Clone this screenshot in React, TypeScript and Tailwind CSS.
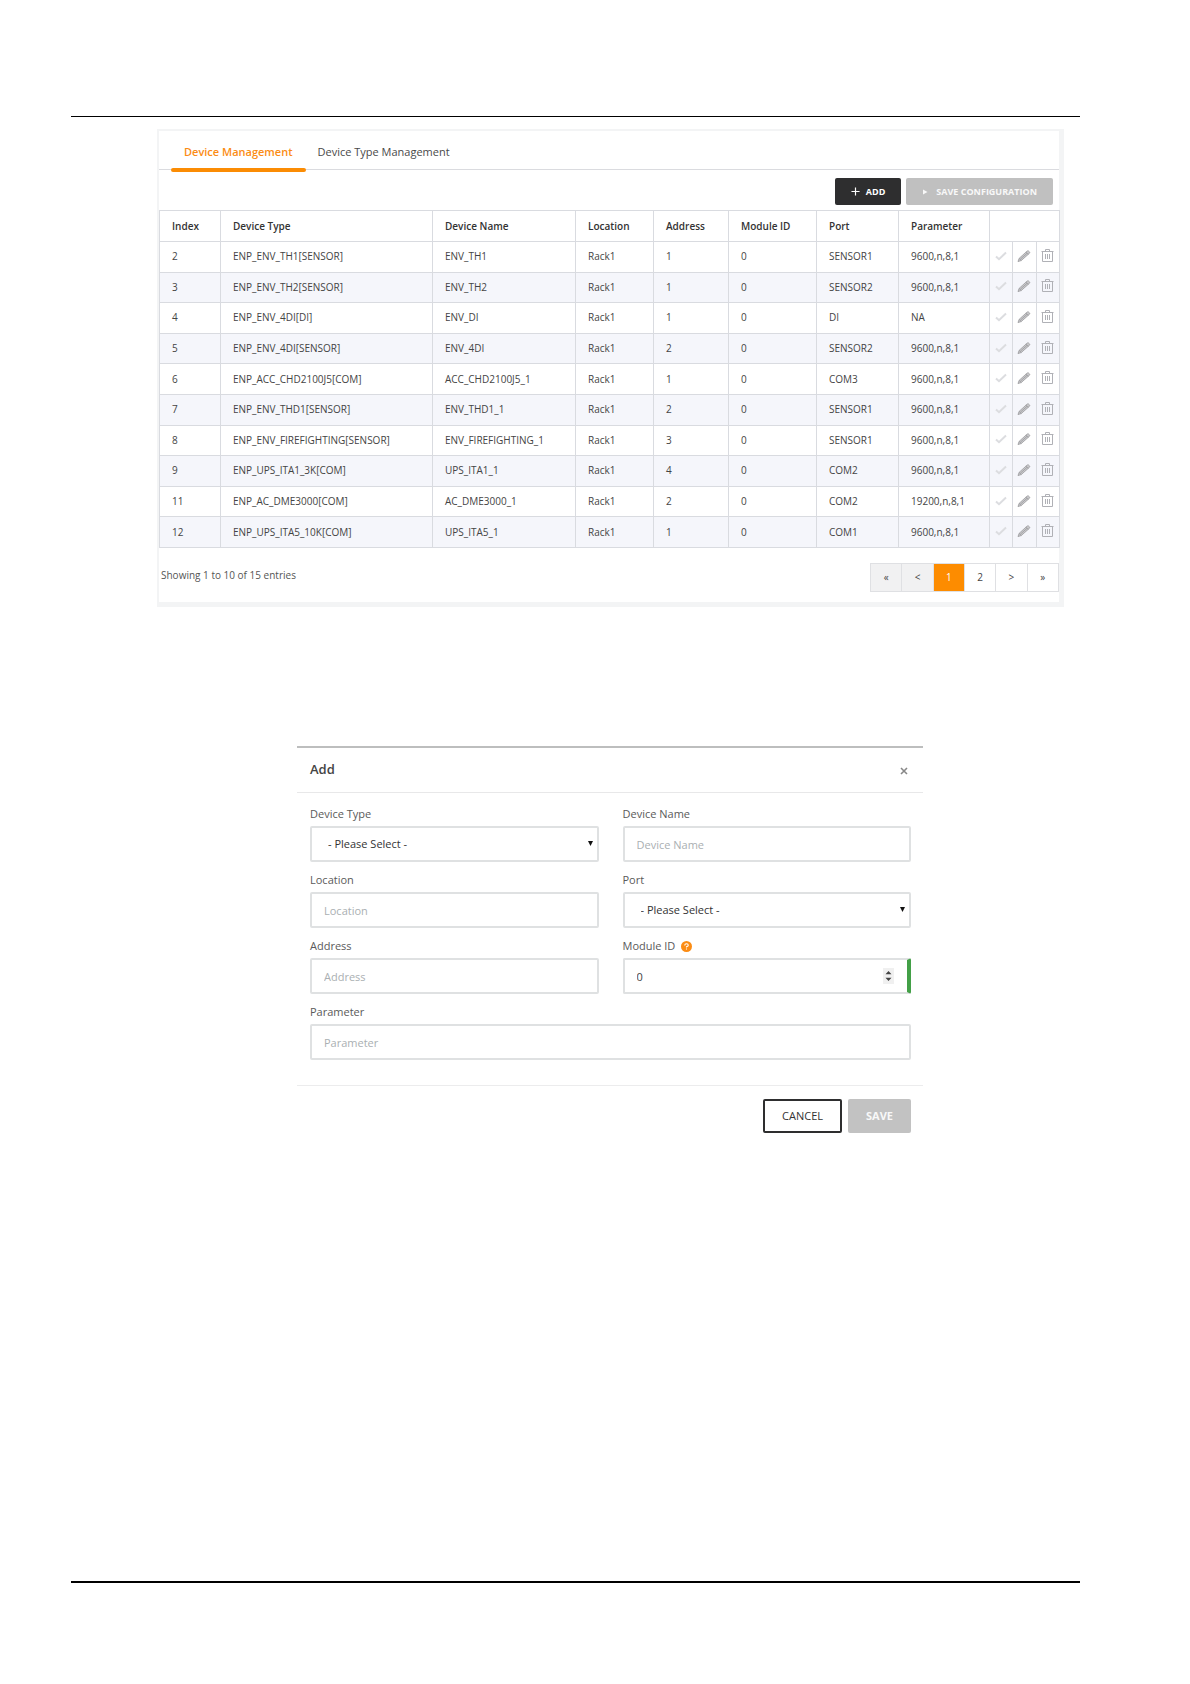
import { useState, type ReactNode } from "react";

type Device = [string, string, string, string, string, string, string, string];

const columns = ["Index", "Device Type", "Device Name", "Location", "Address", "Module ID", "Port", "Parameter"];

const devices: Device[] = [
  ["2", "ENP_ENV_TH1[SENSOR]", "ENV_TH1", "Rack1", "1", "0", "SENSOR1", "9600,n,8,1"],
  ["3", "ENP_ENV_TH2[SENSOR]", "ENV_TH2", "Rack1", "1", "0", "SENSOR2", "9600,n,8,1"],
  ["4", "ENP_ENV_4DI[DI]", "ENV_DI", "Rack1", "1", "0", "DI", "NA"],
  ["5", "ENP_ENV_4DI[SENSOR]", "ENV_4DI", "Rack1", "2", "0", "SENSOR2", "9600,n,8,1"],
  ["6", "ENP_ACC_CHD2100J5[COM]", "ACC_CHD2100J5_1", "Rack1", "1", "0", "COM3", "9600,n,8,1"],
  ["7", "ENP_ENV_THD1[SENSOR]", "ENV_THD1_1", "Rack1", "2", "0", "SENSOR1", "9600,n,8,1"],
  ["8", "ENP_ENV_FIREFIGHTING[SENSOR]", "ENV_FIREFIGHTING_1", "Rack1", "3", "0", "SENSOR1", "9600,n,8,1"],
  ["9", "ENP_UPS_ITA1_3K[COM]", "UPS_ITA1_1", "Rack1", "4", "0", "COM2", "9600,n,8,1"],
  ["11", "ENP_AC_DME3000[COM]", "AC_DME3000_1", "Rack1", "2", "0", "COM2", "19200,n,8,1"],
  ["12", "ENP_UPS_ITA5_10K[COM]", "UPS_ITA5_1", "Rack1", "1", "0", "COM1", "9600,n,8,1"],
];

function CheckIcon() {
  return (
    <svg viewBox="0 0 12 10" className="h-[10px] w-3" fill="none" stroke="#dcdde0" strokeWidth="2">
      <path d="M1 5.4 4 8.2 11 1.6" />
    </svg>
  );
}

function PencilIcon() {
  return (
    <svg viewBox="0 0 14 14" className="size-[14px]" stroke="#9a9a9d" strokeWidth="0.8" strokeLinejoin="round">
      <path d="M1 12.6 2.1 9.4 10 2.2Q10.8 1.5 11.6 2L12.5 2.9Q13.1 3.6 12.3 4.4L4.3 11.5Z" fill="#c8c8cb" />
      <path d="M2.1 9.4 4.3 11.5M8.9 3.2 11.3 5.3M3.4 10.2 10 4.3" fill="none" />
    </svg>
  );
}

function TrashIcon() {
  return (
    <svg viewBox="0 0 13 14" className="h-[14px] w-[13px]" fill="none" stroke="#b0b1b6" strokeWidth="1">
      <path d="M.5 2.5H12.5M4.5 2.5V.5H8.5V2.5M1.5 2.5V12.5H11.5V2.5M4.5 5V10M6.5 5V10M8.5 5V10" />
    </svg>
  );
}

function IconButton({ label, children }: { label: string; children: ReactNode }) {
  return (
    <button type="button" aria-label={label} className="flex w-full items-center justify-center pr-px pb-0.5">
      {children}
    </button>
  );
}

function DevicePanel() {
  const [page, setPage] = useState("1");
  const pages = ["«", "<", "1", "2", ">", "»"];
  return (
    <section className="mr-4 ml-[86px] border-t-2 border-r-[5px] border-b-[5px] border-l-2 border-[#f3f4f5] bg-white">
      <div role="tablist" className="flex h-[39px] border-b border-[#dadbdf] pl-3 text-[11px]">
        <button role="tab" aria-selected="true" type="button" className="relative px-[13px] pt-1 font-semibold text-[#fb8c14]">
          Device Management
          <span className="absolute inset-x-0 -bottom-[3px] h-1 rounded-full bg-[#fb8c04]" />
        </button>
        <button role="tab" aria-selected="false" type="button" className="px-3 pt-1 text-[#4a4a4a]">
          Device Type Management
        </button>
      </div>
      <div className="flex justify-end gap-[5px] pt-2 pr-1.5 pb-[5px] text-[9px] font-bold">
        <button type="button" className="flex h-[27px] items-center gap-1.5 rounded-xs bg-[#2e2e2f] px-4 text-white">
          <svg viewBox="0 0 10 10" className="size-[9px]" stroke="currentColor" strokeWidth="1.3">
            <path d="M5 .5V9.5M.5 5H9.5" />
          </svg>
          ADD
        </button>
        <button type="button" className="flex h-[27px] items-center gap-2 rounded-xs bg-[#c0c0c0] px-4 text-[#f8f8f8]">
          <svg viewBox="0 0 6 6" className="size-[6px]" fill="currentColor">
            <path d="M1 .5 5.5 3 1 5.5Z" />
          </svg>
          SAVE CONFIGURATION
        </button>
      </div>
      <table className="h-[338px] w-full table-fixed border-collapse text-left text-[10px] text-[#444]">
        <colgroup>
          <col className="w-[61px]" />
          <col className="w-[212px]" />
          <col className="w-[143px]" />
          <col className="w-[78px]" />
          <col className="w-[75px]" />
          <col className="w-[88px]" />
          <col className="w-[82px]" />
          <col className="w-[91px]" />
          <col className="w-[23px]" />
          <col className="w-[24px]" />
          <col className="w-[23px]" />
        </colgroup>
        <thead>
          <tr className="h-[31px]">
            {columns.map((c) => (
              <th key={c} scope="col" className="border border-[#d9dbe0] py-0 pr-0 pl-3 font-semibold text-[#333]">
                {c}
              </th>
            ))}
            <td colSpan={3} className="border border-[#d9dbe0]" />
          </tr>
        </thead>
        <tbody>
          {devices.map((d) => (
            <tr key={d[0]} className="even:bg-[#f5f6fb]">
              {d.map((v, i) => (
                <td key={i} className="border border-[#d9dbe0] py-0 pr-0 pl-3 whitespace-nowrap">
                  {v}
                </td>
              ))}
              <td className="border border-[#d9dbe0] p-0">
                <IconButton label={`Apply ${d[2]}`}>
                  <CheckIcon />
                </IconButton>
              </td>
              <td className="border border-[#d9dbe0] p-0">
                <IconButton label={`Edit ${d[2]}`}>
                  <PencilIcon />
                </IconButton>
              </td>
              <td className="border border-[#d9dbe0] p-0">
                <IconButton label={`Delete ${d[2]}`}>
                  <TrashIcon />
                </IconButton>
              </td>
            </tr>
          ))}
        </tbody>
      </table>
      <div className="flex items-start justify-between pt-[15px] pb-[10px]">
        <p className="pt-1 pl-0.5 text-[10px] leading-4 text-[#555]">Showing 1 to 10 of 15 entries</p>
        <nav aria-label="Pages" className="flex h-[29px] w-[189px] divide-x divide-[#dfe0e3] border border-[#dfe0e3] text-[10px] text-[#444]">
          {pages.map((p, i) => (
            <button
              key={p}
              type="button"
              onClick={() => (p === "1" || p === "2") && setPage(p)}
              className={p === page ? "flex-1 bg-[#fd8c00] text-white" : i < 2 ? "flex-1 bg-[#f1f1f2]" : "flex-1 bg-white"}
            >
              {p}
            </button>
          ))}
        </nav>
      </div>
    </section>
  );
}

const box = "h-9 w-full rounded-xs border-2 border-[#dfe1e2] bg-white px-3 text-[11px] text-[#444] placeholder:text-[#aaafb2] outline-none";

function Field({ id, label, hint, children }: { id: string; label: string; hint?: ReactNode; children: ReactNode }) {
  return (
    <div>
      <div className="flex items-center gap-1.5 pb-1">
        <label htmlFor={id} className="text-[11px] leading-4 text-[#5a5a5a]">
          {label}
        </label>
        {hint}
      </div>
      {children}
    </div>
  );
}

function SelectBox({ id }: { id: string }) {
  return (
    <div className="relative">
      <select id={id} className="h-9 w-full appearance-none rounded-xs border-2 border-[#dfe1e2] bg-white px-4 text-[11px] text-[#333] outline-none">
        <option>- Please Select -</option>
      </select>
      <svg viewBox="0 0 5 5" className="pointer-events-none absolute top-[15px] right-1.5 size-[5px]" fill="#111">
        <path d="M0 0H5L2.5 5Z" />
      </svg>
    </div>
  );
}

function AddDialog() {
  return (
    <form className="mr-[157px] ml-[226px] border-t-2 border-[#bdbebe]">
      <header className="flex h-[45px] items-center justify-between border-b border-[#e8e8e9] pr-[15px] pl-[13px]">
        <h2 className="text-[13px] font-semibold text-[#444]">Add</h2>
        <button type="button" aria-label="Close" className="pt-0.5">
          <svg viewBox="0 0 8 8" className="size-2" stroke="#888" strokeWidth="1.6">
            <path d="M1 1 7 7M7 1 1 7" />
          </svg>
        </button>
      </header>
      <div className="grid grid-cols-2 gap-x-6 gap-y-[10px] border-b border-[#ececed] pt-[13px] pr-3 pb-[25px] pl-[13px]">
        <Field id="type" label="Device Type">
          <SelectBox id="type" />
        </Field>
        <Field id="name" label="Device Name">
          <input id="name" placeholder="Device Name" className={box} />
        </Field>
        <Field id="location" label="Location">
          <input id="location" placeholder="Location" className={box} />
        </Field>
        <Field id="port" label="Port">
          <SelectBox id="port" />
        </Field>
        <Field id="address" label="Address">
          <input id="address" placeholder="Address" className={box} />
        </Field>
        <Field
          id="module"
          label="Module ID"
          hint={
            <svg viewBox="0 0 10 10" className="size-[11px]" fill="none">
              <circle cx="5" cy="5" r="5" fill="#fb8c14" />
              <path d="M3.4 4Q3.4 2.5 5 2.5T6.6 3.9Q6.6 4.7 5 5.2V6M5 6.8V7.8" stroke="#fff" strokeWidth="1" />
            </svg>
          }
        >
          <div className="relative">
            <input id="module" type="text" inputMode="numeric" defaultValue="0" className="h-9 w-full rounded-xs border-2 border-r-4 border-[#dfe1e2] border-r-[#43a047] bg-white px-3 text-[11px] text-[#444] outline-none" />
            <svg viewBox="0 0 11 16" className="pointer-events-none absolute top-2.5 right-[17px] h-4 w-[11px]">
              <path d="M0 0H11V16H0Z" fill="#f0f0f0" />
              <path d="M2.5 6.2 5.5 3 8.5 6.2ZM2.5 9.8 5.5 13 8.5 9.8Z" fill="#444" />
            </svg>
          </div>
        </Field>
        <div className="col-span-2">
          <Field id="parameter" label="Parameter">
            <input id="parameter" placeholder="Parameter" className={box} />
          </Field>
        </div>
      </div>
      <footer className="flex justify-end gap-1.5 pt-[13px] pr-3 text-[11px]">
        <button type="button" className="h-[34px] rounded-xs border-2 border-[#2e2e2f] px-[17px] font-medium text-[#333]">
          CANCEL
        </button>
        <button type="submit" className="h-[34px] rounded-xs bg-[#c2c2c2] px-[18px] font-bold text-[#f8f8f8]">
          SAVE
        </button>
      </footer>
    </form>
  );
}

export default function App() {
  return (
    <div className="flex min-h-screen flex-col bg-white pt-[116px] pr-[110px] pb-[101px] pl-[71px] font-['Open_Sans',sans-serif]">
      <hr className="mb-3 border-t border-black" />
      <DevicePanel />
      <div className="mt-[139px]">
        <AddDialog />
      </div>
      <hr className="mt-auto border-t-2 border-black" />
    </div>
  );
}
